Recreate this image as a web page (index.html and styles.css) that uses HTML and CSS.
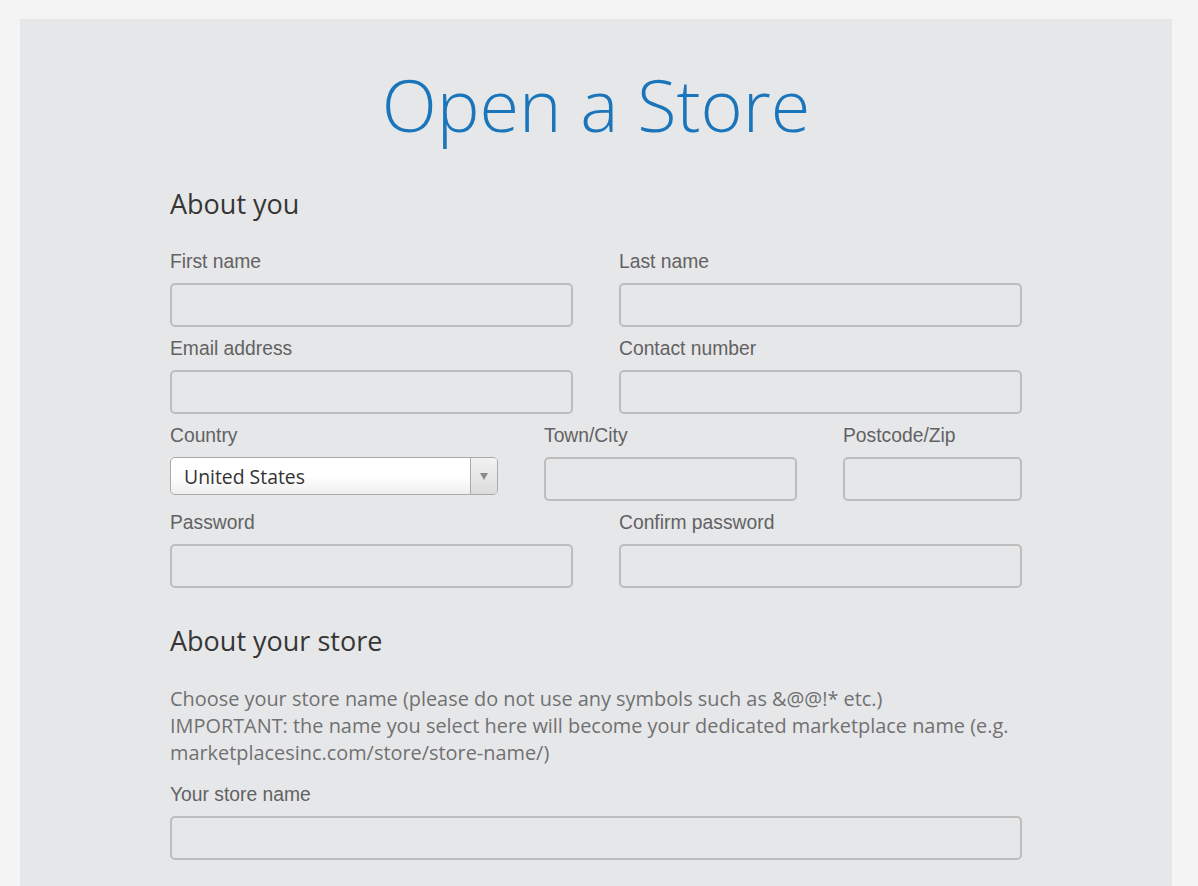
FILE: index.html
```html
<!DOCTYPE html>
<html lang="en">
<head>
<meta charset="utf-8">
<title>Open a Store</title>
<link rel="stylesheet" href="styles.css">
</head>
<body>
<div class="panel">
  <h1 class="title">Open a Store</h1>
  <form class="form">
    <h2 class="section">About you</h2>
    <div class="row two">
      <div class="field"><label class="label">First name</label><input class="input" type="text"></div>
      <div class="field"><label class="label">Last name</label><input class="input" type="text"></div>
    </div>
    <div class="row two">
      <div class="field"><label class="label">Email address</label><input class="input" type="text"></div>
      <div class="field"><label class="label">Contact number</label><input class="input" type="text"></div>
    </div>
    <div class="row three">
      <div class="field"><label class="label">Country</label>
        <div class="select"><span class="select-text">United States</span><span class="select-arrow"><span class="tri"></span></span></div>
      </div>
      <div class="field"><label class="label">Town/City</label><input class="input" type="text"></div>
      <div class="field"><label class="label">Postcode/Zip</label><input class="input" type="text"></div>
    </div>
    <div class="row two">
      <div class="field"><label class="label">Password</label><input class="input" type="password"></div>
      <div class="field"><label class="label">Confirm password</label><input class="input" type="password"></div>
    </div>
    <h2 class="section store">About your store</h2>
    <p class="note">Choose your store name (please do not use any symbols such as &amp;@@!* etc.)<br>IMPORTANT: the name you select here will become your dedicated marketplace name (e.g. marketplacesinc.com/store/store-name/)</p>
    <div class="field"><label class="label">Your store name</label><input class="input" type="text"></div>
  </form>
</div>
</body>
</html>
```
FILE: styles.css
```css
html, body {
  margin: 0;
  padding: 0;
}
body {
  background: #f4f4f4;
  padding: 19px 26px 0 20px;
  height: 886px;
  box-sizing: border-box;
  overflow: hidden;
  font-family: "Open Sans", "Liberation Sans", sans-serif;
}
.panel {
  background: #e6e7e9;
  height: 900px;
  padding-top: 49px;
  box-sizing: border-box;
}
.title {
  margin: 0;
  text-align: center;
  font-family: "Open Sans", sans-serif;
  font-weight: 300;
  font-size: 72px;
  line-height: 72px;
  color: #1b75bb;
}
.form {
  width: 852px;
  margin: 48px auto 0;
}
.section {
  margin: 0 0 30px;
  font-family: "Open Sans", sans-serif;
  font-weight: 400;
  font-size: 27px;
  line-height: 32px;
  color: #363636;
}
.section.store {
  margin-top: 27px;
  margin-bottom: 28px;
}
.row {
  display: grid;
  column-gap: 46px;
}
.row.two {
  grid-template-columns: 1fr 1fr;
}
.row.three {
  grid-template-columns: 328px 253px 1fr;
}
.field {
  display: flex;
  flex-direction: column;
  margin-bottom: 10px;
  min-width: 0;
}
.label {
  font-family: "Liberation Sans", Arial, sans-serif;
  font-size: 19.3px;
  line-height: 23px;
  color: #626262;
  margin-bottom: 10px;
}
.input {
  width: 100%;
  min-width: 0;
  height: 44px;
  box-sizing: border-box;
  border: 2px solid #bdbdbd;
  border-radius: 5px;
  background: transparent;
  margin: 0;
  padding: 0 10px;
  font-size: 18px;
}
.select {
  height: 38px;
  box-sizing: border-box;
  border: 1px solid #aaaaaa;
  border-radius: 5px;
  background: linear-gradient(#ffffff 0%, #ffffff 50%, #eeeeee 100%);
  display: flex;
  align-items: center;
  overflow: hidden;
}
.select-text {
  flex: 1;
  padding-left: 13px;
  font-family: "Open Sans", sans-serif;
  font-size: 19.4px;
  color: #333333;
}
.select-arrow {
  width: 26px;
  align-self: stretch;
  border-left: 1px solid #aaaaaa;
  background: linear-gradient(#f2f2f2, #dcdcdc);
  display: flex;
  align-items: center;
  justify-content: center;
}
.tri {
  width: 0;
  height: 0;
  border-left: 4px solid transparent;
  border-right: 4px solid transparent;
  border-top: 7px solid #8a8a8a;
}
.note {
  margin: 0 0 17px;
  font-family: "Open Sans", sans-serif;
  font-size: 19.9px;
  line-height: 27px;
  color: #717171;
}
```
